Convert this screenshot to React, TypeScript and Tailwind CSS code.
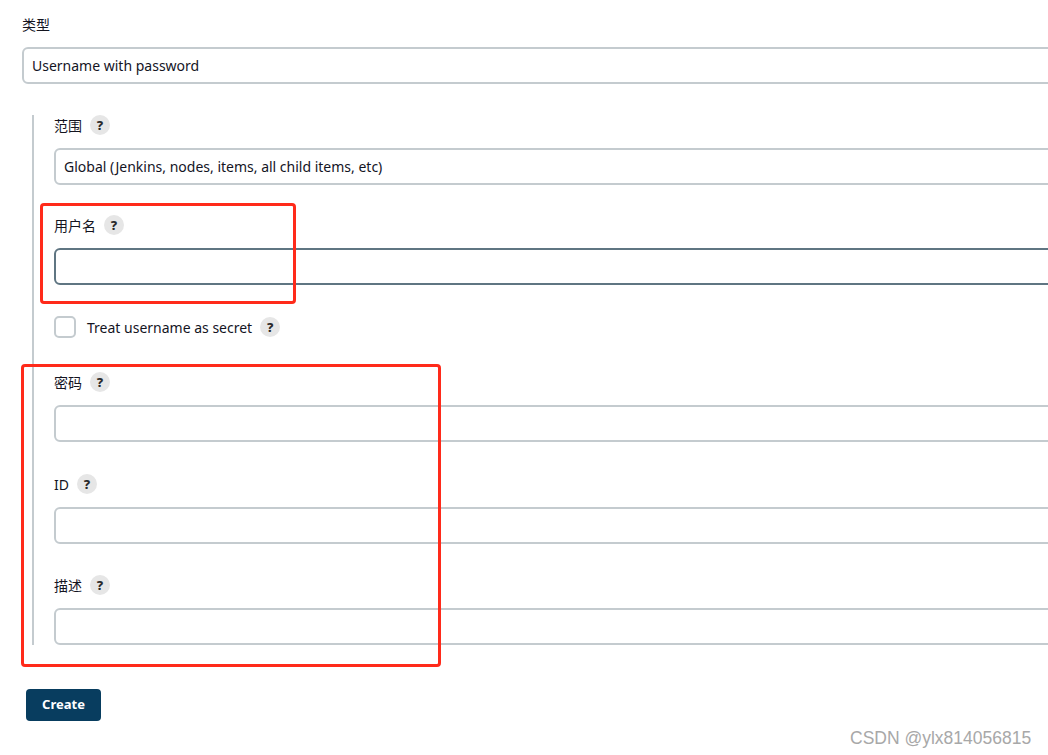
import React from "react";

const font = { fontFamily: '"Noto Sans", "Noto Sans CJK SC", sans-serif' };

function Help() {
	return (
		<span className="ml-[8px] inline-flex h-[20px] w-[20px] items-center justify-center rounded-full bg-[#e6e6e6] text-[13px] font-extrabold leading-none text-[#2a2a2a]">
			?
		</span>
	);
}

function Field({
	label,
	value,
	help = true,
	focused = false,
}: {
	label: string;
	value?: string;
	help?: boolean;
	focused?: boolean;
}) {
	return (
		<div className="flex flex-col">
			<div className="flex h-[20px] items-center text-[14px] text-[#14141f]">
				{label}
				{help && <Help />}
			</div>
			<div
				className={
					"-mr-6 mt-[13px] flex h-[37px] items-center rounded-[6px] border-2 bg-white px-[8px] text-[14px] text-[#14141f] " +
					(focused ? "border-[#5f7582]" : "border-[#c4cbcf]")
				}
			>
				{value}
			</div>
		</div>
	);
}

export default function App() {
	return (
		<div
			className="relative h-[755px] w-[1048px] overflow-hidden bg-white"
			style={font}
		>
			<div className="flex flex-col pl-[22px] pt-[14px]">
				<Field label="类型" value="Username with password" help={false} />

				<div className="mt-[31px] ml-[10px] flex flex-col gap-[30px] border-l-2 border-[#c4cbcf] pl-[20px]">
					<Field
						label="范围"
						value="Global (Jenkins, nodes, items, all child items, etc)"
					/>
					<Field label="用户名" focused />
					<div className="mt-[1px] flex items-center text-[14px] text-[#14141f]">
						<span className="h-[22px] w-[22px] rounded-[5px] border-2 border-[#c4cbcf]" />
						<span className="ml-[11px]">Treat username as secret</span>
						<Help />
					</div>
					<div className="mt-[4px]">
						<Field label="密码" />
					</div>
					<div className="mt-[2px]">
						<Field label="ID" />
					</div>
					<div className="mt-[1px]">
						<Field label="描述" />
					</div>
				</div>

				<button className="mt-[44px] ml-[4px] h-[32px] w-[75px] rounded-[4px] bg-[#083d5f] text-[13px] font-bold text-white">
					Create
				</button>
			</div>

			{/* annotation boxes */}
			<div className="absolute left-[40px] top-[203px] h-[101px] w-[256px] rounded-[4px] border-[3px] border-[#ff2a1a]" />
			<div className="absolute left-[21px] top-[364px] h-[303px] w-[420px] rounded-[4px] border-[3px] border-[#ff2a1a]" />

			<div
				className="absolute left-[850px] top-[725px] text-[17.5px] text-[#a8a8a8]"
				style={{ fontFamily: '"Liberation Sans", Arial, sans-serif' }}
			>
				CSDN @ylx814056815
			</div>
		</div>
	);
}
